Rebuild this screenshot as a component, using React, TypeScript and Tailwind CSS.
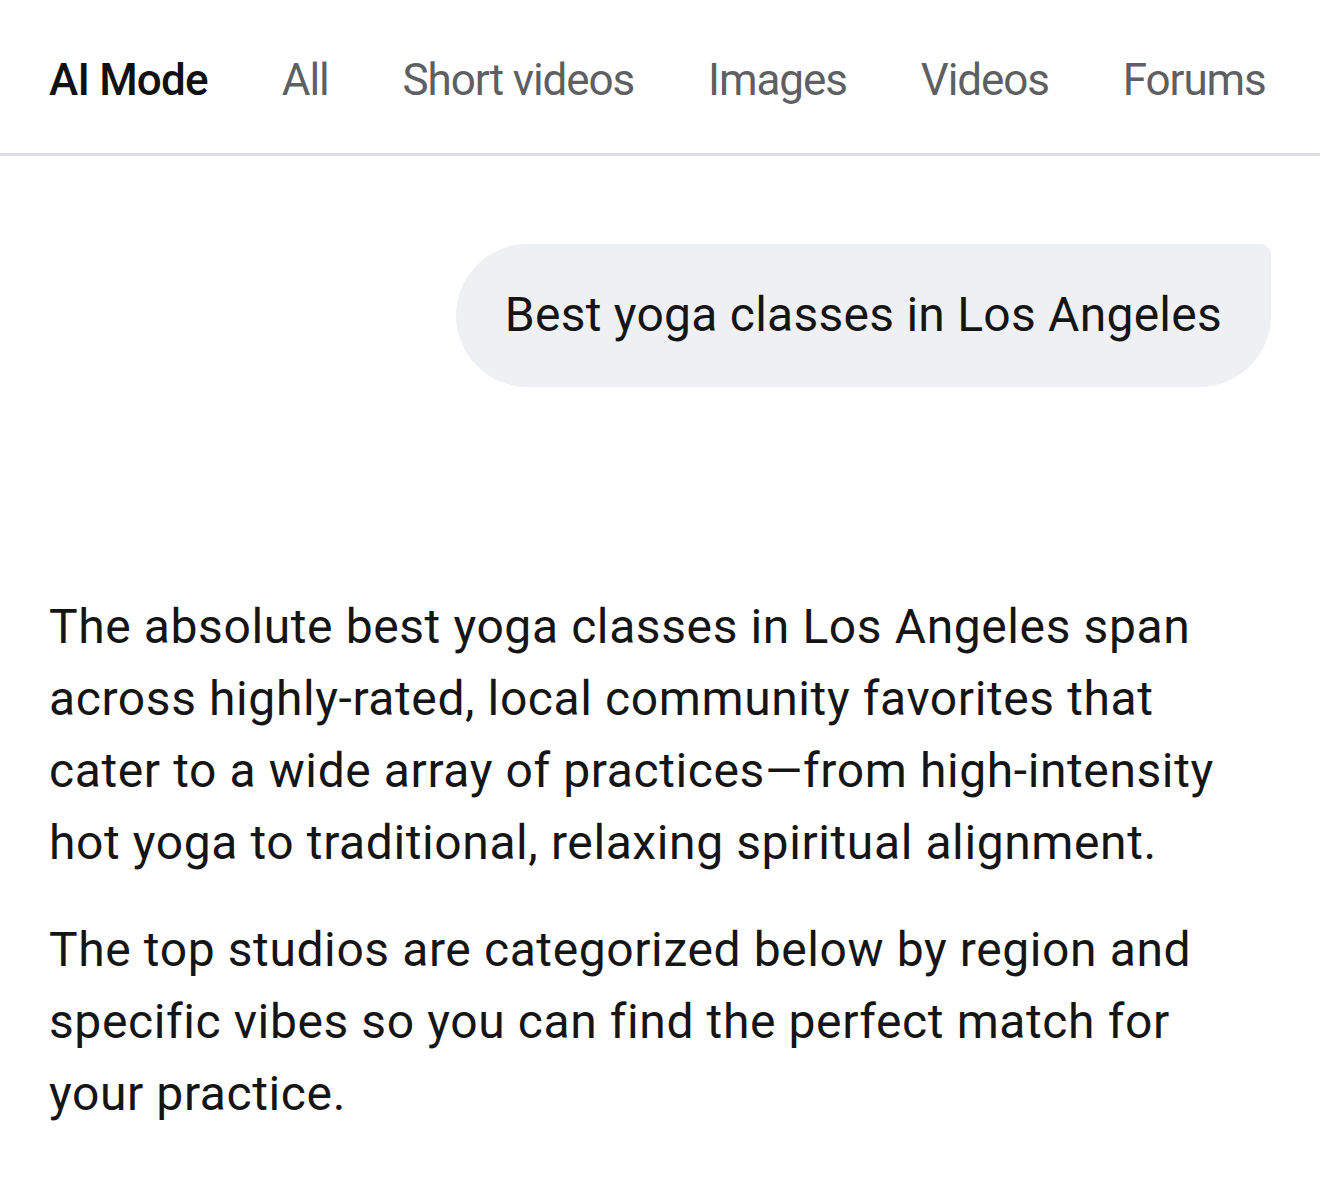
export default function App() {
  const tabs = ["AI Mode", "All", "Short videos", "Images", "Videos", "Forums"];
  return (
    <div
      className="w-[1320px] h-[1184px] bg-white overflow-hidden"
      style={{ fontFamily: "Roboto, 'Noto Sans', sans-serif" }}
    >
      {/* Search vertical tabs */}
      <nav className="h-[156px] flex items-center gap-[74px] pl-[49px] pt-[7px] border-b-[3px] border-[#dfdee6] whitespace-nowrap">
        {tabs.map((t, i) => (
          <span
            key={t}
            className={
              i === 0
                ? "text-[44px] font-medium text-[#111111] tracking-[-0.8px]"
                : "text-[44px] text-[#5e5f63] tracking-[-1.1px]"
            }
          >
            {t}
          </span>
        ))}
      </nav>

      {/* User query bubble */}
      <div className="flex justify-end pr-[49px] pt-[88px]">
        <div className="h-[143px] px-[49px] flex items-center bg-[#eff0f4] rounded-[72px] rounded-tr-[10px]">
          <span className="text-[48px] text-[#151515] tracking-[0.25px] leading-none pb-[2px]">
            Best yoga classes in Los Angeles
          </span>
        </div>
      </div>

      {/* Response text */}
      <div className="pl-[49px] pr-[49px] pt-[204px] text-[48px] leading-[72px] text-[#151515] tracking-[0.6px]">
        <p>
          The absolute best yoga classes in Los Angeles span across highly-rated, local community favorites that cater to a wide array of practices—from high-intensity hot yoga to traditional, relaxing spiritual alignment.
        </p>
        <p className="mt-[35px]">
          The top studios are categorized below by region and specific vibes so you can find the perfect match for your practice.
        </p>
      </div>
    </div>
  );
}
